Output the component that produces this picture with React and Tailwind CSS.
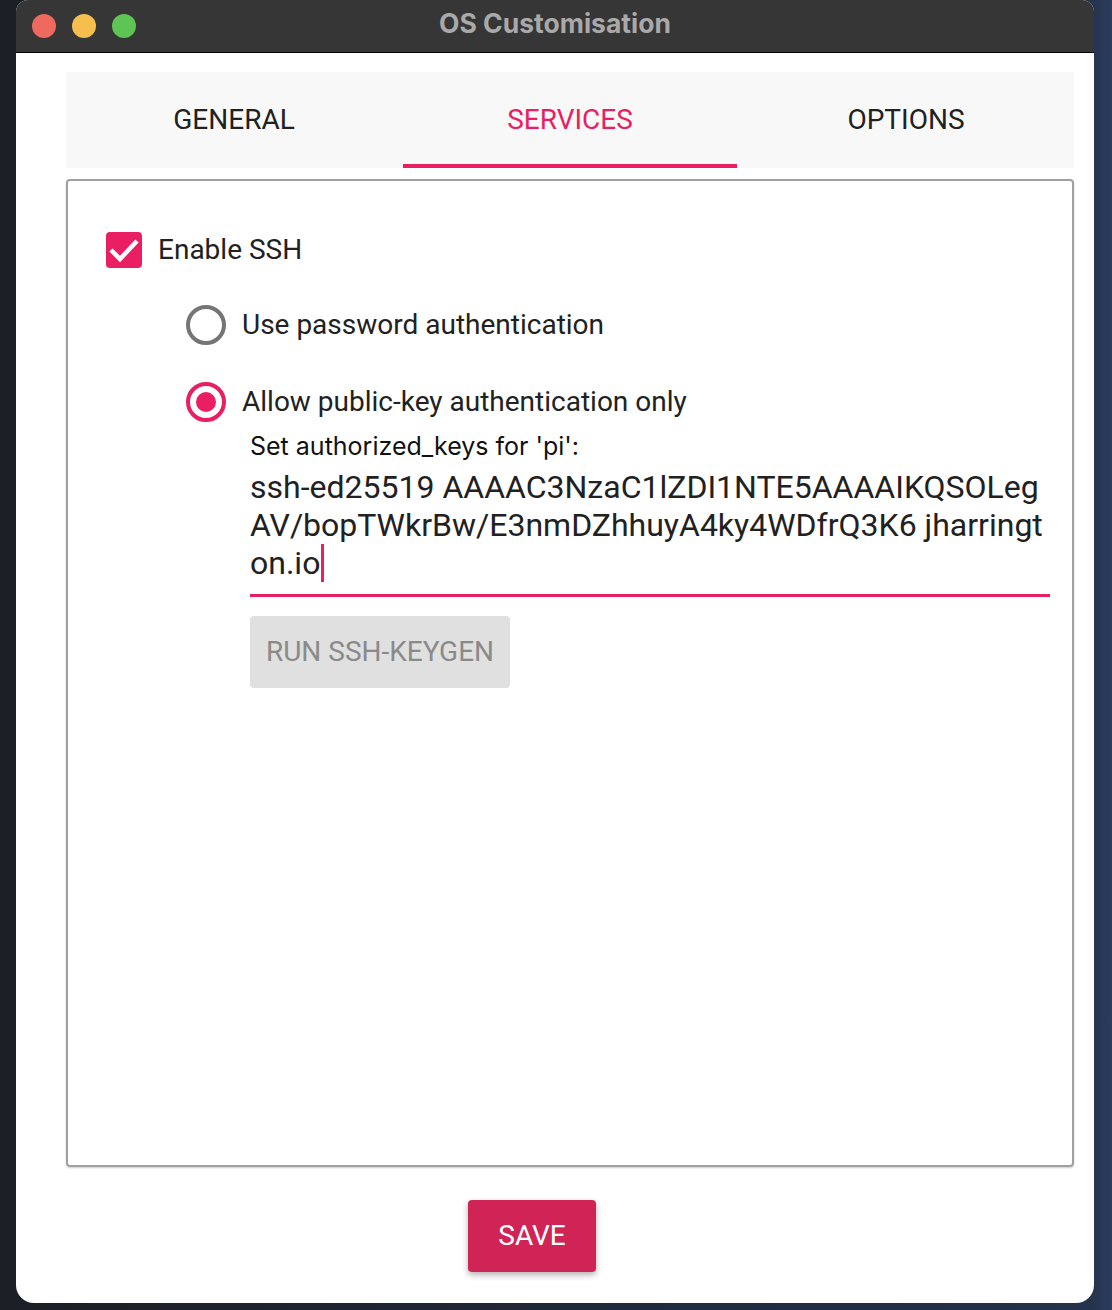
export default function App() {
  return (
    <div
      className="w-[1112px] h-[1310px] flex pl-[16px] pr-[18px] pb-[7px] bg-[linear-gradient(90deg,#1b1f26_0%,#1b1f26_2%,#24324c_98%,#2b3c5c_100%)]"
      style={{ fontFamily: "Roboto, 'Noto Sans', sans-serif" }}
    >
      <div className="flex-1 flex flex-col bg-white rounded-t-[12px] rounded-b-[18px] overflow-hidden">
        {/* Title bar */}
        <div className="relative h-[53px] shrink-0 bg-[#363636] border-b border-black flex items-center pl-[16px] gap-[16px]">
          <span className="w-[24px] h-[24px] rounded-full bg-[#ee6a5f]" />
          <span className="w-[24px] h-[24px] rounded-full bg-[#f5be4f]" />
          <span className="w-[24px] h-[24px] rounded-full bg-[#5ec454]" />
          <div
            className="absolute inset-x-0 top-0 h-[48px] flex items-center justify-center text-[26.5px] font-bold text-[#a9a9a9]"
            style={{ fontFamily: "Inter, 'Liberation Sans', sans-serif" }}
          >
            OS Customisation
          </div>
        </div>

        {/* Content */}
        <div className="flex-1 flex flex-col pl-[50px] pr-[20px] pt-[19px]">
          {/* Tabs */}
          <div className="h-[96px] bg-[#f8f8f8] grid grid-cols-3">
            <div className="flex items-center justify-center text-[28px] text-[#212121]">GENERAL</div>
            <div className="relative flex items-center justify-center text-[28px] text-[#e91e63]">
              SERVICES
              <span className="absolute left-[1px] right-[1px] bottom-0 h-[4px] bg-[#e91e63]" />
            </div>
            <div className="flex items-center justify-center text-[28px] text-[#212121]">OPTIONS</div>
          </div>

          {/* Panel */}
          <div className="mt-[11px] h-[988px] border-2 border-[#a0a0a0] rounded-[4px] shadow-[0_1px_2px_rgba(0,0,0,0.2)] pt-[51px] pl-[38px] text-[#212121]">
            <div className="h-[36px] flex items-center gap-[16px]">
              <span className="w-[36px] h-[36px] rounded-[4px] bg-[#e91e63] flex items-center justify-center">
                <svg width="36" height="36" viewBox="0 0 36 36">
                  <path d="M5 18 L14 27 L31 9" fill="none" stroke="white" strokeWidth="4.5" />
                </svg>
              </span>
              <span className="text-[28px]">Enable SSH</span>
            </div>

            <div className="ml-[80px] mt-[37px] h-[40px] flex items-center gap-[16px]">
              <span className="w-[40px] h-[40px] rounded-full border-4 border-[#757575]" />
              <span className="text-[28px]">Use password authentication</span>
            </div>

            <div className="ml-[80px] mt-[37px] h-[40px] flex items-center gap-[16px]">
              <span className="w-[40px] h-[40px] rounded-full border-4 border-[#e91e63] flex items-center justify-center">
                <span className="w-[20px] h-[20px] rounded-full bg-[#e91e63]" />
              </span>
              <span className="text-[28px]">Allow public-key authentication only</span>
            </div>

            <div className="ml-[144px] w-[800px]">
              <div
                className="mt-[10px] text-[25px] leading-[28px] text-[#111]"
                style={{ fontFamily: "Inter, 'Liberation Sans', sans-serif" }}
              >
                Set authorized_keys for 'pi':
              </div>
              <div className="mt-[8px] pb-[12px] border-b-[3px] border-[#e91e63] text-[32px] leading-[38px]">
                <div>ssh-ed25519 AAAAC3NzaC1lZDI1NTE5AAAAIKQSOLeg</div>
                <div>AV/bopTWkrBw/E3nmDZhhuyA4ky4WDfrQ3K6 jharringt</div>
                <div className="flex items-center">
                  on.io<span className="ml-[1px] w-[3px] h-[38px] bg-[#e91e63]" />
                </div>
              </div>
              <button className="mt-[19px] w-[260px] h-[72px] rounded-[4px] bg-[#e0e0e0] text-[28px] text-[#8a8a8a]">
                RUN SSH-KEYGEN
              </button>
            </div>
          </div>

          {/* Save */}
          <div className="mt-[33px] pl-[402px]">
            <button className="w-[128px] h-[72px] rounded-[4px] bg-[#cf2455] text-white text-[28px] shadow-[0_3px_6px_rgba(0,0,0,0.3)]">
              SAVE
            </button>
          </div>
        </div>
      </div>
    </div>
  );
}
